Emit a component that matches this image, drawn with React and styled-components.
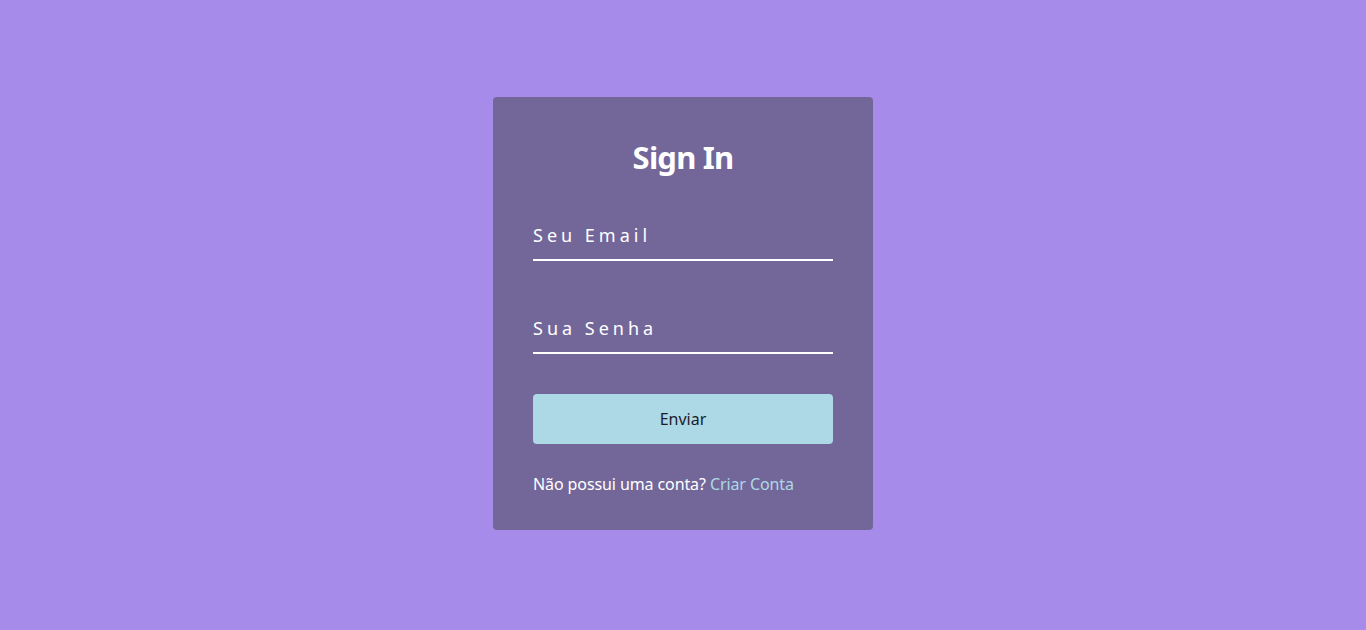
import React from "react";
import styled, { createGlobalStyle } from "styled-components";

const Global = createGlobalStyle`
  * { box-sizing: border-box; }
  html, body { margin: 0; padding: 0; }
  body {
    background: #a78bea;
    font-family: "Noto Sans", "Lato", sans-serif;
  }
`;

const Page = styled.main`
  min-height: 100vh;
  display: flex;
  align-items: center;
  justify-content: center;
  padding-bottom: 3px;
`;

const Card = styled.form`
  width: 380px;
  background: #73679a;
  border-radius: 4px;
  padding: 40px 40px 34px;
  display: flex;
  flex-direction: column;
`;

const Title = styled.h1`
  margin: 0 0 37px;
  font-size: 31px;
  line-height: 40px;
  font-weight: 700;
  color: #fff;
  text-align: center;
  letter-spacing: -0.8px;
`;

const Field = styled.input`
  width: 100%;
  background: transparent;
  border: none;
  border-bottom: 2px solid #fff;
  outline: none;
  padding: 9px 0 12px;
  font-family: inherit;
  font-size: 18px;
  line-height: 24px;
  letter-spacing: 4px;
  color: #fff;
  margin-bottom: ${(p) => p.$mb}px;
  &::placeholder { color: #fff; opacity: 1; }
`;

const Button = styled.button`
  height: 50px;
  width: 100%;
  border: none;
  border-radius: 4px;
  background: #add8e6;
  color: #1d1d2a;
  font-family: inherit;
  font-size: 16px;
  cursor: pointer;
  margin-bottom: 28px;
`;

const Footer = styled.p`
  margin: 0;
  font-size: 16px;
  line-height: 24px;
  color: #fff;
  letter-spacing: -0.1px;
`;

const Link = styled.a`
  color: #add8e6;
  text-decoration: none;
`;

export default function App() {
  return (
    <>
      <Global />
      <Page>
        <Card onSubmit={(e) => e.preventDefault()}>
          <Title>Sign In</Title>
          <Field type="email" placeholder="Seu Email" $mb={46} />
          <Field type="password" placeholder="Sua Senha" $mb={40} />
          <Button type="submit">Enviar</Button>
          <Footer>
            Não possui uma conta? <Link href="#">Criar Conta</Link>
          </Footer>
        </Card>
      </Page>
    </>
  );
}
